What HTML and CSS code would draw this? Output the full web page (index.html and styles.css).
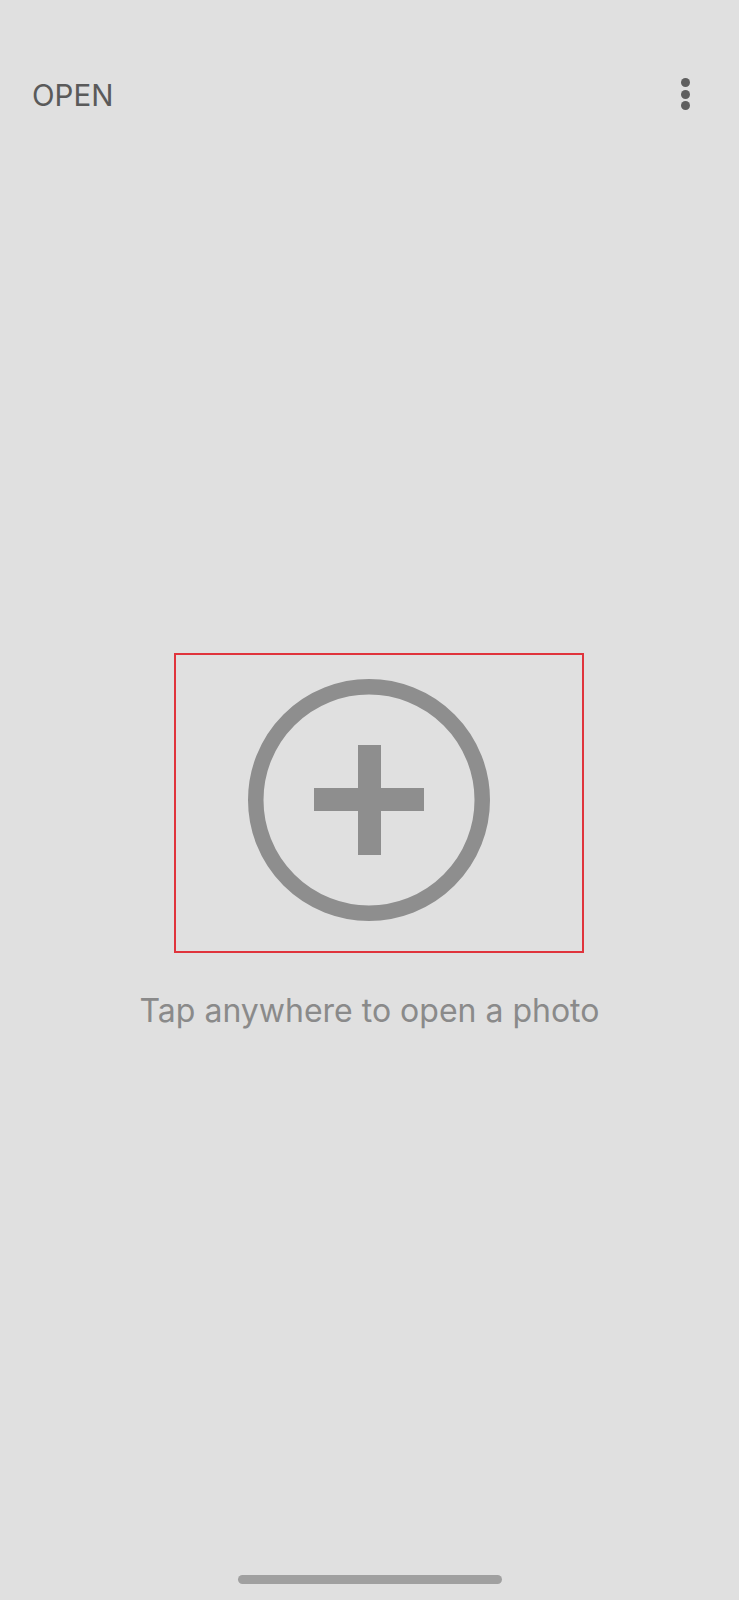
FILE: index.html
```html
<!DOCTYPE html>
<html>
<head>
<meta charset="utf-8">
<link rel="stylesheet" href="styles.css">
</head>
<body>
<div class="screen">
  <header class="topbar">
    <span class="open">OPEN</span>
    <span class="menu" aria-label="More"><i></i><i></i><i></i></span>
  </header>
  <main class="content">
    <div class="dropbox">
      <svg class="plus" width="242" height="242" viewBox="0 0 242 242">
        <circle cx="121" cy="121" r="113.25" fill="none" stroke="#8e8e8e" stroke-width="15.5"/>
        <rect x="66" y="109" width="110" height="23" fill="#8e8e8e"/>
        <rect x="110" y="66" width="23" height="110" fill="#8e8e8e"/>
      </svg>
    </div>
    <p class="hint">Tap anywhere to open a photo</p>
  </main>
  <div class="home"></div>
</div>
</body>
</html>
```
FILE: styles.css
```css
html, body {
  margin: 0;
  padding: 0;
  background: #e0e0e0;
}
.screen {
  width: 739px;
  height: 1600px;
  display: flex;
  flex-direction: column;
  font-family: Inter, Roboto, "Liberation Sans", sans-serif;
}
.topbar {
  display: flex;
  justify-content: space-between;
  align-items: center;
  height: 40px;
  padding: 75px 49px 0 32px;
}
.open {
  font-size: 29.5px;
  line-height: 40px;
  color: #5a5a5a;
}
.menu {
  display: flex;
  flex-direction: column;
  gap: 2.5px;
  margin-top: -2px;
}
.menu i {
  display: block;
  width: 9px;
  height: 9px;
  border-radius: 50%;
  background: #5f5f5f;
}
.content {
  flex: 1;
  display: flex;
  flex-direction: column;
  align-items: flex-start;
}
.dropbox {
  margin: 538px 0 0 174px;
  width: 406px;
  height: 296px;
  border: 2px solid #e0343c;
  display: flex;
  align-items: flex-start;
}
.plus {
  display: block;
  margin: 24px 0 0 72px;
}
.hint {
  align-self: center;
  margin: 38px 0 0 0;
  font-size: 32px;
  line-height: 40px;
  color: #8a8a8a;
}
.home {
  align-self: center;
  width: 264px;
  height: 9px;
  border-radius: 5px;
  background: #a0a0a0;
  margin: 0 0 16px 0;
}
```
